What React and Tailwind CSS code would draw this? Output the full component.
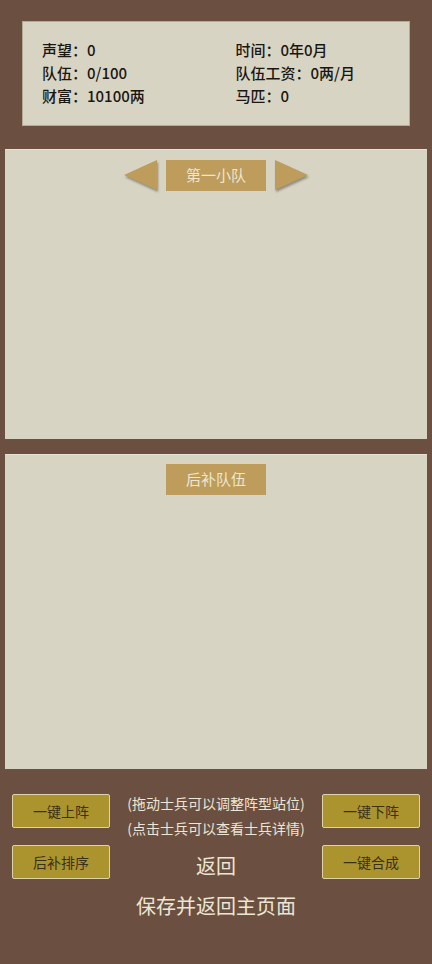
const font = { fontFamily: '"Noto Sans CJK SC", "Noto Sans", sans-serif' };

function Arrow({ dir }) {
  // 三角形箭头
  return (
    <svg width="36" height="34" viewBox="0 0 36 34" className="drop-shadow-[1px_2px_1px_rgba(0,0,0,0.35)]">
      {dir === "left" ? (
        <polygon points="1,17 34,2 34,32" fill="#bd9c5c" />
      ) : (
        <polygon points="35,17 2,2 2,32" fill="#bd9c5c" />
      )}
    </svg>
  );
}

function Tab({ children }) {
  return (
    <div className="w-[100px] h-[31px] bg-[#bd9c5c] flex items-center justify-center text-[15px] text-[#eee6cf]">
      {children}
    </div>
  );
}

function Btn({ children }) {
  return (
    <button className="w-[98px] h-[34px] bg-[#ab942e] border border-[#ddd3a8] rounded-[2px] text-[14px] text-[#3a2f1a] flex items-center justify-center">
      {children}
    </button>
  );
}

export default function App() {
  return (
    <div className="w-[432px] h-[964px] bg-[#6b4f41] flex flex-col" style={font}>
      {/* 顶部信息 */}
      <div className="mt-[21px] mx-[22px] h-[105px] bg-[#d8d4c3] border border-[#b4ab93] pl-[19px] pt-[16px] grid grid-cols-2 content-start text-[15px] leading-[23px] text-[#1a1612] font-medium">
        <div>声望：0</div>
        <div className="pl-[10px]">时间：0年0月</div>
        <div>队伍：0/100</div>
        <div className="pl-[10px]">队伍工资：0两/月</div>
        <div>财富：10100两</div>
        <div className="pl-[10px]">马匹：0</div>
      </div>

      {/* 第一小队 */}
      <div className="mt-[23px] mx-[5px] h-[290px] bg-[#d8d4c3] border-t border-[#e6e2d4] flex flex-col items-center pt-[8px]">
        <div className="flex items-center gap-[7px]">
          <Arrow dir="left" />
          <Tab>第一小队</Tab>
          <Arrow dir="right" />
        </div>
      </div>

      {/* 后补队伍 */}
      <div className="mt-[15px] mx-[5px] h-[315px] bg-[#d8d4c3] border-t border-[#e6e2d4] flex flex-col items-center pt-[9px]">
        <Tab>后补队伍</Tab>
      </div>

      {/* 底部按钮 */}
      <div className="mt-[25px] px-[12px] flex justify-between">
        <div className="flex flex-col gap-[17px]">
          <Btn>一键上阵</Btn>
          <Btn>后补排序</Btn>
        </div>
        <div className="flex flex-col items-center text-[14px] leading-[25px] text-[#ece6d4] -mt-[3px]">
          <div>(拖动士兵可以调整阵型站位)</div>
          <div>(点击士兵可以查看士兵详情)</div>
          <div className="mt-[11px] text-[20px] leading-[28px]">返回</div>
        </div>
        <div className="flex flex-col gap-[17px]">
          <Btn>一键下阵</Btn>
          <Btn>一键合成</Btn>
        </div>
      </div>
      <div className="mt-[12px] text-center text-[20px] leading-[28px] text-[#ece6d4]">保存并返回主页面</div>
    </div>
  );
}
